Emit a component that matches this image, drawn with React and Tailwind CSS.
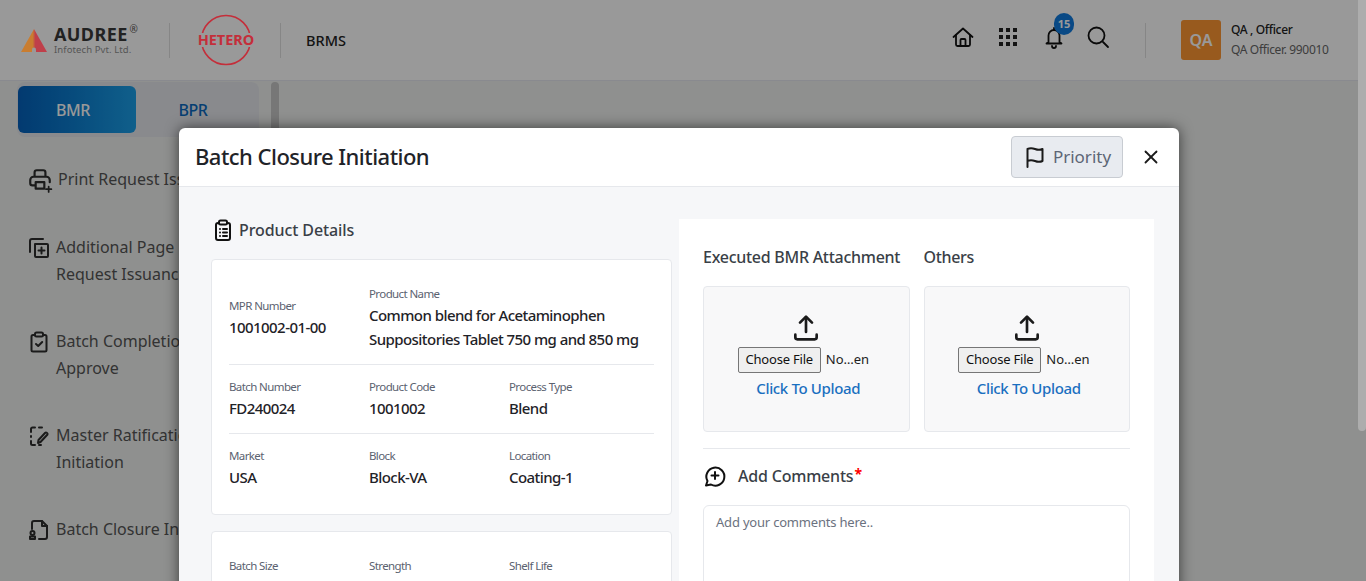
import React from 'react';
import { X } from 'lucide-react';

const font = { fontFamily: '"Noto Sans", sans-serif' };

function Ico({ children, className = 'w-6 h-6', sw = 2 }) {
    return (
        <svg viewBox="0 0 24 24" fill="none" stroke="currentColor" strokeWidth={sw} strokeLinecap="round" strokeLinejoin="round" className={className}>
            {children}
        </svg>
    );
}

function Field({ label, value, className = '' }) {
    return (
        <div className={className}>
            <div className="text-[11.5px] leading-[16px] text-[#5b6270] tracking-[-0.6px]">{label}</div>
            <div className="mt-[1px] text-[15px] leading-[24px] font-medium text-[#1f2328] tracking-[-0.56px]">{value}</div>
        </div>
    );
}

function UploadBox() {
    return (
        <div className="flex-1 h-[146px] bg-[#f8f8f9] border border-[#e6e8ec] rounded-[4px] flex flex-col items-center pt-[25px]">
            <Ico className="w-[32px] h-[32px] text-[#1b1b1b]">
                <path d="M4 17v2a1.5 1.5 0 0 0 1.5 1.5h13a1.5 1.5 0 0 0 1.5-1.5v-2" />
                <path d="M7.5 8 12 3.5 16.5 8" />
                <path d="M12 4v11" />
            </Ico>
            {/* same look as a native file input with a squeezed label */}
            <div className="mt-[3px] flex items-center gap-[5px] text-[13px] text-[#222] -ml-[5px]">
                <button className="w-[83px] h-[26px] bg-[#efefef] border border-[#767676] rounded-[2px] text-[#111] tracking-[-0.2px]">Choose File</button>
                <span className="w-[44px]">No…en</span>
            </div>
            <div className="mt-[3px] ml-[4px] text-[15px] leading-[24px] font-medium text-[#1a6fc0] tracking-[-0.35px]">Click To Upload</div>
        </div>
    );
}

const sideItems = [
    {
        lines: ['Print Request Issuance'],
        gap: 'gap-[7px] mb-[1px]',
        icon: (
            <Ico className="w-[26px] h-[26px] shrink-0">
                <path d="M7 8V5a2 2 0 0 1 2-2h6a2 2 0 0 1 2 2v3" />
                <path d="M7 17H5a2 2 0 0 1-2-2v-3a3 3 0 0 1 3-3h12a3 3 0 0 1 3 3v2" />
                <path d="M8 14h8v6H8z" />
                <path d="M20 18v5M17.500 20.500h5" strokeWidth="1.6" />
            </Ico>
        ),
    },
    {
        lines: ['Additional Page', 'Request Issuance'],
        icon: (
            <Ico>
                <path d="M8 8h12a1 1 0 0 1 1 1v11a1 1 0 0 1-1 1H9a1 1 0 0 1-1-1z" />
                <path d="M14.500 11.500v6M11.500 14.500h6" />
                <path d="M16 3H5a2 2 0 0 0-2 2v11" />
            </Ico>
        ),
    },
    {
        lines: ['Batch Completion', 'Approve'],
        icon: (
            <Ico>
                <path d="M8 5H6a1.500 1.500 0 0 0-1.500 1.500V20A1.500 1.500 0 0 0 6 21.500h12a1.500 1.500 0 0 0 1.500-1.500V6.500A1.500 1.500 0 0 0 18 5h-2" />
                <rect x="8" y="2.500" width="8" height="4" rx="1.500" />
                <path d="m9 14 2.200 2 4-4" />
            </Ico>
        ),
    },
    {
        lines: ['Master Ratification', 'Initiation'],
        icon: (
            <Ico>
                <path d="M4 8V5a1.500 1.500 0 0 1 1.500-1.500H8M12 3.500h3M4 12v1M4 17v2.500A1.500 1.500 0 0 0 5.500 21H8M12 21h2" />
                <path d="m13.500 18 7-7.500a1.500 1.500 0 0 0-2.500-1.500l-6.500 7-.5 3z" />
            </Ico>
        ),
    },
    {
        lines: ['Batch Closure Initiation'],
        icon: (
            <Ico>
                <path d="M5 11V5a2 2 0 0 1 2-2h8l5 5v11a2 2 0 0 1-2 2h-6" />
                <path d="M15 3v5h5" />
                <circle cx="5.500" cy="15" r="2" />
                <path d="M3 21v-2.500h5V21z" />
            </Ico>
        ),
    },
];

function Page() {
    return (
        <div className="h-full bg-[#eef0ee]">
            {/* top bar */}
            <header className="h-[81px] bg-white border-b border-[#e4e7ee] flex items-center pl-[21px]">
                {/* logos keep their strong colour through the backdrop in the reference */}
                <svg viewBox="0 0 26 23" className="relative z-10 w-[26px] h-[23px] mt-[1px]">
                    <defs>
                        <linearGradient id="aud" x1="0" x2="1" y1="0" y2="0">
                            <stop offset="0.45" stopColor="#c97d30" />
                            <stop offset="0.55" stopColor="#bf3f4a" />
                        </linearGradient>
                    </defs>
                    <path d="M13 0 26 23H0z" fill="url(#aud)" />
                    <path d="M13 18.500a2 2 0 0 1 2 2V23h-4v-2.500a2 2 0 0 1 2-2z" fill="#999" />
                </svg>
                <div className="relative z-10 ml-[7px] w-[94px] mt-[2px]">
                    <div className="flex h-[17px] leading-[17px] text-[18px] font-bold text-[#222] tracking-[0.4px]">
                        <span>AUDREE</span>
                        <span className="ml-[2px] text-[10px] leading-[12px] font-normal text-[#333] -mt-[3px]">®</span>
                    </div>
                    <div className="text-[9.5px] leading-[12px] text-[#555] tracking-[0.1px] mt-[1px]">Infotech Pvt. Ltd.</div>
                </div>
                <div className="ml-[21px] w-px h-[35px] bg-[#e0e0e0]" />
                <svg viewBox="0 0 62 52" className="relative z-10 ml-[25px] w-[62px] h-[52px] shrink-0">
                    <circle cx="31" cy="26" r="24.500" fill="none" stroke="#c42e3a" strokeWidth="1.600" />
                    <rect x="0" y="19" width="62" height="14" fill="#999" />
                    <text x="31" y="31" textAnchor="middle" fontSize="14.500" fontWeight="700" fill="#c42e3a" style={font}>HETERO</text>
                </svg>
                <div className="ml-[23px] w-px h-[35px] bg-[#e0e0e0]" />
                <div className="ml-[25px] text-[14.500px] font-medium text-[#222] pt-[1px]">BRMS</div>

                <div className="ml-auto flex items-center">
                    <div className="flex items-center -mt-[6px]">
                        <Ico className="w-[24px] h-[24px] text-[#111]" sw={1.8}>
                            <path d="M2.500 12 12 3.500l9.500 8.500" />
                            <path d="M5 10v9.500a1.500 1.500 0 0 0 1.500 1.500h11a1.500 1.500 0 0 0 1.500-1.500V10" />
                            <path d="M9.500 21v-6a1 1 0 0 1 1-1h3a1 1 0 0 1 1 1v6" />
                        </Ico>
                        <div className="ml-[24px] grid grid-cols-3 gap-[3px] w-[18px]">
                            {Array.from({ length: 9 }).map((_, i) => (
                                <span key={i} className="w-[4px] h-[4px] bg-[#222]" />
                            ))}
                        </div>
                        <div className="relative ml-[25px] w-[24px] h-[24px]">
                            <Ico className="w-[24px] h-[24px] text-[#111]" sw={1.8}>
                                <path d="M6.500 17V10.500a5.500 5.500 0 0 1 11 0V17l2 1.500h-15z" />
                                <path d="M10 21a2 2 0 0 0 4 0M12 3v2" />
                            </Ico>
                            <span className="absolute left-[12px] top-[-12px] w-[20px] h-[22px] rounded-full bg-[#107bde] text-white text-[11px] leading-[22px] font-bold text-center">15</span>
                        </div>
                        <Ico className="ml-[20px] w-[24px] h-[24px] text-[#111]" sw={1.8}>
                            <circle cx="10.500" cy="10.500" r="8" />
                            <path d="m17 17 5 5" />
                        </Ico>
                    </div>
                    <div className="ml-[35px] w-px h-[35px] bg-[#e0e0e0]" />
                    <div className="ml-[35px] w-[40px] h-[40px] rounded-[3px] bg-[#fd9632] text-white font-semibold text-[16px] flex items-center justify-center">QA</div>
                    <div className="ml-[10px] w-[135px] tracking-[-0.35px]">
                        <div className="text-[12px] leading-[20px] font-medium text-[#222]">QA , Officer</div>
                        <div className="text-[12px] leading-[20px] text-[#666]">QA Officer. 990010</div>
                    </div>
                </div>
            </header>

            {/* sidebar */}
            <aside className="relative w-[280px] pl-[17px]">
                <div className="mt-[1px] w-[242px] h-[55px] rounded-[8px] bg-[#e4e6ec] p-[1px] flex items-center text-[16px] font-medium tracking-[-0.5px]">
                    <div className="w-[118px] h-[47px] rounded-[6px] bg-gradient-to-r from-[#0561bb] to-[#1b9fe8] text-white flex items-center justify-center pr-[8px] pt-[1px]">BMR</div>
                    <div className="flex-1 text-center text-[#0a69be] pr-[8px] pt-[1px]">BPR</div>
                </div>
                <div className="absolute right-[1px] top-0 w-[8px] h-[480px] rounded-full bg-[#c6c6c6]" />
                <nav className="mt-[29px] flex flex-col gap-[40px] pl-[12px] pr-[20px]">
                    {sideItems.map((it) => (
                        <div key={it.lines[0]} className={`flex text-[#555] text-[16px] leading-[27px] ${it.gap || 'gap-[5px]'}`}>
                            <span className="text-[#2d2d2d] -ml-[2px] w-[24px] h-[27px] flex items-center shrink-0">{it.icon}</span>
                            <div className="whitespace-nowrap">
                                {it.lines.map((l) => <div key={l}>{l}</div>)}
                            </div>
                        </div>
                    ))}
                </nav>
            </aside>
        </div>
    );
}

function Modal() {
    return (
        <div className="absolute left-[179px] top-[128px] w-[1000px] h-[600px] rounded-[6px] bg-white shadow-[0_0_14px_rgba(0,0,0,0.6)] overflow-hidden">
            <div className="h-[59px] border-b border-[#e6e8ec] flex items-center pl-[16px]">
                <h1 className="text-[22px] leading-[30px] -mt-[2px] font-medium text-[#1f2328] tracking-[-0.53px]">Batch Closure Initiation</h1>
                <button className="ml-auto w-[112px] h-[42px] rounded-[4px] border border-[#c8ccd2] bg-[#e8ebf0] flex items-center justify-center gap-[6px] text-[17px] text-[#5d6675]">
                    <svg viewBox="0 0 24 24" fill="none" stroke="#1a1a1a" strokeWidth="2" strokeLinecap="round" strokeLinejoin="round" className="w-[24px] h-[24px]">
                        <path d="M4.500 22V4c3-1.500 5-1 7.500 0s4.500 1.500 7.500 0v12c-3 1.500-5 1-7.500 0s-4.500-1.500-7.500 0" />
                    </svg>
                    Priority
                </button>
                <X className="ml-[17px] mr-[17px] w-[22px] h-[22px] text-[#1a1a1a]" strokeWidth={2} />
            </div>
            <div className="h-full bg-[#f6f7f9] flex pl-[32px] pt-[32px]">
                <div className="w-[461px]">
                    <div className="flex items-center gap-[4px] h-[24px] mt-[-1px]">
                        <Ico className="w-[24px] h-[24px] text-[#111]">
                            <path d="M8 5H7a2 2 0 0 0-2 2v13a2 2 0 0 0 2 2h10a2 2 0 0 0 2-2V7a2 2 0 0 0-2-2h-1" />
                            <rect x="8" y="2.500" width="8" height="4" rx="1.500" />
                            <path d="M9 11h.01M12 11h4M9 14.500h.01M12 14.500h4M9 18h.01M12 18h4" />
                        </Ico>
                        <span className="text-[16px] font-medium text-[#3a3f47] tracking-[-0.1px]">Product Details</span>
                    </div>
                    <div className="mt-[17px] h-[256px] bg-white border border-[#e6e8ec] rounded-[4px] px-[17px]">
                        <div className="h-[105px] flex items-center border-b border-[#e6e8ec] pt-[13px]">
                            <Field label="MPR Number" value="1001002-01-00" className="w-[140px]" />
                            <Field label="Product Name" value={<>Common blend for Acetaminophen<br />Suppositories Tablet 750 mg and 850 mg</>} />
                        </div>
                        <div className="h-[69px] flex items-center border-b border-[#e6e8ec] pt-[1px]">
                            <Field label="Batch Number" value="FD240024" className="w-[140px]" />
                            <Field label="Product Code" value="1001002" className="w-[140px]" />
                            <Field label="Process Type" value="Blend" />
                        </div>
                        <div className="h-[69px] flex items-center pb-[1px]">
                            <Field label="Market" value="USA" className="w-[140px]" />
                            <Field label="Block" value="Block-VA" className="w-[140px]" />
                            <Field label="Location" value="Coating-1" />
                        </div>
                    </div>
                    <div className="mt-[16px] h-[120px] bg-white border border-[#e6e8ec] rounded-[4px] px-[17px] pt-[26px] flex">
                        <Field label="Batch Size" value="" className="w-[140px]" />
                        <Field label="Strength" value="" className="w-[140px]" />
                        <Field label="Shelf Life" value="" />
                    </div>
                </div>
                <div className="ml-[7px] w-[475px] bg-white px-[24px] pt-[26px]">
                    <div className="flex gap-[14px]">
                        <div className="flex-1 min-w-0">
                            <div className="h-[24px] text-[16px] leading-[24px] font-medium text-[#3a3f47] tracking-[-0.27px] whitespace-nowrap mb-[17px]">Executed BMR Attachment</div>
                            <UploadBox />
                        </div>
                        <div className="flex-1 min-w-0">
                            <div className="h-[24px] text-[16px] leading-[24px] font-medium text-[#3a3f47] tracking-[-0.35px] mb-[17px]">Others</div>
                            <UploadBox />
                        </div>
                    </div>
                    <div className="mt-[16px] border-t border-[#e6e8ec] flex items-center h-[55px] mb-[2px]">
                        <svg viewBox="0 0 24 24" fill="none" stroke="#111" strokeWidth="2" strokeLinecap="round" strokeLinejoin="round" className="w-[24px] h-[24px]">
                            <path d="M3 21.500l1.500-4.500A9 9 0 1 1 8 20.500z" />
                            <path d="M12 8v7M8.500 11.500h7" />
                        </svg>
                        <span className="ml-[11px] text-[16px] font-medium text-[#3a3f47] tracking-[-0.2px]">Add Comments<span className="ml-[1px] text-[14px] leading-[14px] font-bold text-[#f00] align-[3px]">*</span></span>
                    </div>
                    <textarea
                        placeholder="Add your comments here.."
                        className="w-full h-[130px] border border-[#e6e8ec] rounded-[6px] px-[12px] py-[6px] text-[13px] leading-[20px] placeholder:text-[#6b7280] tracking-[-0.2px] resize-none outline-none"
                    />
                </div>
            </div>
        </div>
    );
}

export default function App() {
    return (
        <div style={font} className="relative w-[1366px] h-[581px] overflow-hidden">
            <Page />
            {/* backdrop */}
            <div className="absolute inset-0 bg-black/40" />
            <Modal />
            {/* page scrollbar thumb */}
            <div className="absolute right-0 top-0 w-[8px] h-[431px] bg-[#adadad] rounded-b-[4px]" />
        </div>
    );
}
